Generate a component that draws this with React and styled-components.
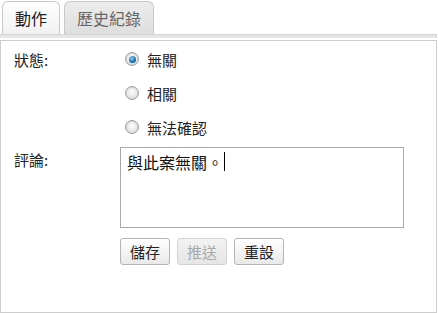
import React, { useState } from 'react';
import styled, { createGlobalStyle } from 'styled-components';

const GlobalStyle = createGlobalStyle`
  html, body {
    margin: 0;
    padding: 0;
    background: #fff;
  }
  body {
    font-family: "Noto Sans CJK TC", "Noto Sans", sans-serif;
    color: #222;
  }
`;

const Page = styled.div`
  width: 438px;
  height: 313px;
  display: flex;
  flex-direction: column;
  box-sizing: border-box;
  padding-top: 1px;
`;

const TabBar = styled.div`
  display: flex;
  gap: 4px;
  padding-left: 2px;
  height: 33px;
  align-items: flex-end;
`;

const Tab = styled.div`
  height: 33px;
  box-sizing: border-box;
  padding: 0 12px 1px;
  display: flex;
  align-items: center;
  font-size: 16px;
  line-height: 1;
  border: 1px solid #c8c8c8;
  border-bottom: none;
  border-radius: 6px 6px 0 0;
  color: ${p => (p.$active ? '#222' : '#666')};
  background: ${p =>
    p.$active
      ? 'linear-gradient(#ffffff, #f1f1f1)'
      : 'linear-gradient(#ececec, #dedede)'};
`;

const TabStrip = styled.div`
  height: 3px;
  background: #e6e6e6;
  border-top: 1px solid #d4d4d4;
  border-right: 1px solid #cfcfcf;
  margin-right: 1px;
`;

const Panel = styled.div`
  flex: 1;
  margin-top: 2px;
  margin-right: 1px;
  border: 1px solid #cdcdcd;
  box-sizing: border-box;
  padding: 1px 0 0 13px;
  display: flex;
  flex-direction: column;
`;

const Row = styled.div`
  display: flex;
  align-items: ${p => (p.$top ? 'flex-start' : 'center')};
  min-height: 34px;
  margin-top: ${p => p.$gap || 0}px;
`;

const Label = styled.div`
  width: 106px;
  font-size: 15px;
  line-height: 1;
  padding-top: ${p => p.$pad || 0}px;
`;

const Option = styled.label`
  display: flex;
  align-items: center;
  gap: 8px;
  font-size: 15px;
  line-height: 1;
  margin-left: 5px;
  cursor: pointer;
`;

const RadioDot = styled.span`
  width: 14px;
  height: 14px;
  border-radius: 50%;
  box-sizing: border-box;
  border: 1px solid #9c9c9c;
  box-shadow: inset 0 0 0 1px #d8d8d8;
  background: radial-gradient(circle at 50% 40%, #fdfdfd, #dcdcdc 85%);
  position: relative;
  &::after {
    content: '';
    display: ${p => (p.$on ? 'block' : 'none')};
    position: absolute;
    left: 2.5px;
    top: 2.5px;
    width: 7px;
    height: 7px;
    border-radius: 50%;
    background: radial-gradient(circle at 40% 35%, #8fd0f5, #1f74b0 55%, #0b3c66);
  }
`;

const Comment = styled.div`
  width: 284px;
  height: 81px;
  box-sizing: border-box;
  border: 1px solid #a9a9a9;
  padding: 5px 6px;
  font-size: 16px;
  line-height: 1.2;
  color: #111;
  display: flex;
  align-items: flex-start;
`;

const Caret = styled.span`
  display: inline-block;
  width: 1px;
  height: 19px;
  background: #000;
  margin-left: 1px;
  margin-top: -1px;
`;

const Buttons = styled.div`
  display: flex;
  gap: 6px;
  margin-left: 106px;
  margin-top: 10px;
`;

const Button = styled.button`
  width: 50px;
  height: 27px;
  box-sizing: border-box;
  padding: 0;
  font-family: inherit;
  font-size: 15px;
  border-radius: 3px;
  border: 1px solid ${p => (p.disabled ? '#d2d2d2' : '#b4b4b4')};
  color: ${p => (p.disabled ? '#a8a8a8' : '#222')};
  background: ${p =>
    p.disabled
      ? 'linear-gradient(#f2f2f2, #e6e6e6)'
      : 'linear-gradient(#ffffff, #e9e9e9)'};
  & + & {
    margin-left: ${p => p.$extra || 0}px;
  }
`;

const options = ['無關', '相關', '無法確認'];

export default function App() {
  const [choice, setChoice] = useState('無關');
  return (
    <Page>
      <GlobalStyle />
      <TabBar>
        <Tab $active>動作</Tab>
        <Tab>歷史紀錄</Tab>
      </TabBar>
      <TabStrip />
      <Panel>
        {options.map((o, i) => (
          <Row key={o}>
            <Label>{i === 0 ? '狀態:' : ''}</Label>
            <Option onClick={() => setChoice(o)}>
              <RadioDot $on={choice === o} />
              {o}
            </Option>
          </Row>
        ))}
        <Row $top $gap={3}>
          <Label $pad={5}>評論:</Label>
          <Comment>
            與此案無關。<Caret />
          </Comment>
        </Row>
        <Buttons>
          <Button>儲存</Button>
          <Button disabled>推送</Button>
          <Button $extra={1}>重設</Button>
        </Buttons>
      </Panel>
    </Page>
  );
}
